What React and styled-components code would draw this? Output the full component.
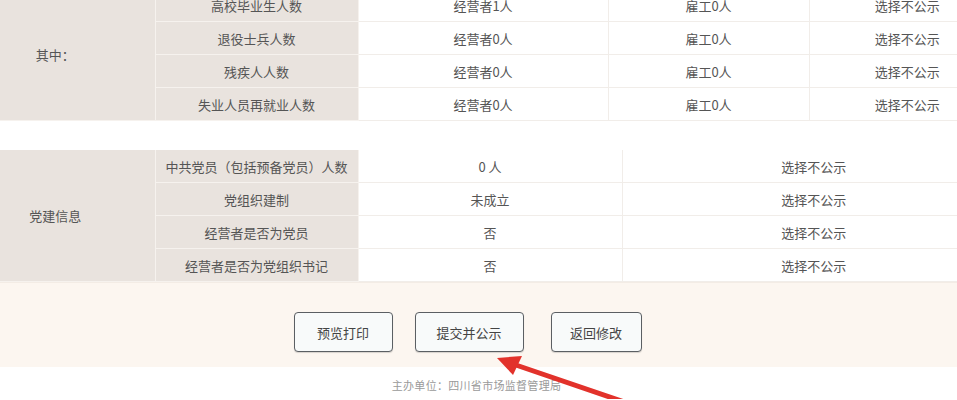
import React from 'react';
import styled, { createGlobalStyle } from 'styled-components';

const GlobalStyle = createGlobalStyle`
  html, body {
    margin: 0;
    padding: 0;
    background: #fff;
    overflow: hidden;
  }
  body {
    font-family: "Noto Sans CJK SC", "Noto Sans", sans-serif;
    color: #555;
  }
`;

const employment = [
  { name: '高校毕业生人数', boss: '经营者1人', staff: '雇工0人' },
  { name: '退役士兵人数', boss: '经营者0人', staff: '雇工0人' },
  { name: '残疾人人数', boss: '经营者0人', staff: '雇工0人' },
  { name: '失业人员再就业人数', boss: '经营者0人', staff: '雇工0人' },
];

const party = [
  { name: '中共党员（包括预备党员）人数', value: '0 人' },
  { name: '党组织建制', value: '未成立' },
  { name: '经营者是否为党员', value: '否' },
  { name: '经营者是否为党组织书记', value: '否' },
];

const App = () => {
  return (
    <>
      <GlobalStyle />
      <Page>
        <Table $top>
          <colgroup>
            <col style={{ width: 155 }} />
            <col style={{ width: 203 }} />
            <col style={{ width: 250 }} />
            <col style={{ width: 201 }} />
            <col />
          </colgroup>
          <tbody>
            {employment.map((row, i) => (
              <tr key={row.name}>
                {i === 0 && <Group rowSpan={4}>其中：</Group>}
                <Label>{row.name}</Label>
                <Cell>{row.boss}</Cell>
                <Cell>{row.staff}</Cell>
                <Cell>选择不公示</Cell>
              </tr>
            ))}
          </tbody>
        </Table>

        <Table>
          <colgroup>
            <col style={{ width: 155 }} />
            <col style={{ width: 203 }} />
            <col style={{ width: 264 }} />
            <col />
          </colgroup>
          <tbody>
            {party.map((row, i) => (
              <tr key={row.name}>
                {i === 0 && <Group rowSpan={4}>党建信息</Group>}
                <Label>{row.name}</Label>
                <Cell>{row.value}</Cell>
                <Cell>选择不公示</Cell>
              </tr>
            ))}
          </tbody>
        </Table>

        <ActionBar>
          <Button $w={99}>预览打印</Button>
          <Button $w={109}>提交并公示</Button>
          <Button $w={91} $gap={5}>返回修改</Button>
          <Arrow width="140" height="60" viewBox="0 0 140 60">
            <line x1="140" y1="52" x2="14" y2="9" stroke="#e2322b" strokeWidth="5" strokeLinecap="round" />
            <polygon points="1,4 26,2 17,21" fill="#e2322b" />
          </Arrow>
        </ActionBar>

        <Footer>主办单位：四川省市场监督管理局</Footer>
      </Page>
    </>
  );
};

export default App;

const Page = styled.div`
  width: 1005px;
  position: relative;
`;

const Table = styled.table`
  width: 100%;
  border-collapse: collapse;
  table-layout: fixed;
  margin-top: ${p => (p.$top ? '-11px' : '0')};
  margin-bottom: ${p => (p.$top ? '29px' : '0')};
  font-size: 13px;

  td {
    height: 32px;
    padding: 0;
    text-align: center;
    border: 1px solid #f1ede9;
  }
  tr:first-child td {
    border-top: none;
  }
  td:first-child {
    border-left: none;
  }
  td:last-child {
    border-right: none;
  }
`;

const Label = styled.td`
  background: #e9e3de;
  color: #555;
  && {
    border-color: #f6f2ee;
  }
`;

const Group = styled(Label)`
  && {
    padding-right: 44px;
  }
`;

const Cell = styled.td`
  background: #fff;
  color: #555;
`;

const ActionBar = styled.div`
  position: relative;
  height: 85px;
  background: #fcf6f0;
  border-top: 1px solid #f3ece5;
  display: flex;
  align-items: center;
  justify-content: center;
  gap: 22px;
  padding-right: 70px;
  box-sizing: border-box;
`;

const Button = styled.button`
  width: ${p => p.$w}px;
  height: 40px;
  margin-top: 14px;
  margin-left: ${p => p.$gap || 0}px;
  border: 1px solid #5b5f63;
  border-radius: 4px;
  background: #f8fafa;
  color: #444;
  font-family: "Noto Sans CJK SC", "Noto Sans", sans-serif;
  font-size: 13px;
  cursor: pointer;
  box-shadow: 0 1px 1px rgba(0, 0, 0, 0.15);
`;

const Arrow = styled.svg`
  position: absolute;
  left: 496px;
  top: 71px;
  overflow: visible;
  z-index: 2;
`;

const Footer = styled.div`
  height: 32px;
  padding-top: 10px;
  padding-right: 52px;
  box-sizing: border-box;
  text-align: center;
  font-size: 11px;
  letter-spacing: 0.3px;
  color: #9a9a9a;
`;
